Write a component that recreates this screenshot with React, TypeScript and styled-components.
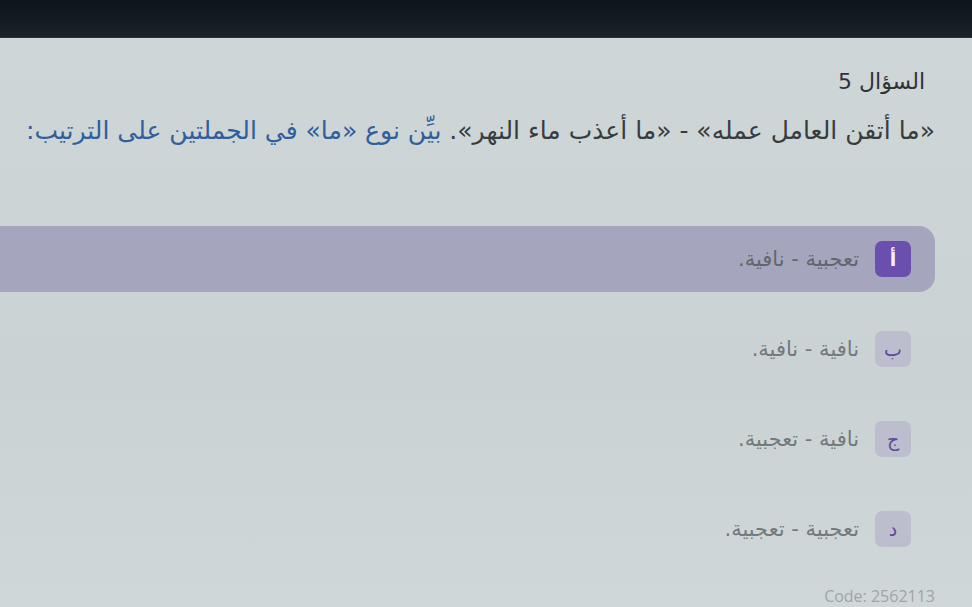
import styled, { createGlobalStyle } from 'styled-components'

const Global = createGlobalStyle`
  html, body {
    margin: 0;
    padding: 0;
    background: #cbd3d4;
    overflow: hidden;
  }
  #root {
    height: 607px;
  }
`

const TopBar = styled.div`
  height: 37px;
  background: linear-gradient(180deg, #0d1419 0%, #1a2329 100%);
  border-bottom: 1px solid #2a3338;
`

const Page = styled.main`
  direction: rtl;
  font-family: "DejaVu Sans", sans-serif;
  padding: 30px 37px 0 0;
  background: linear-gradient(180deg, #cfd6d7 0%, #cad2d3 60%, #d0d7d8 100%);
  height: 570px;
  box-sizing: border-box;
`

const Heading = styled.h2`
  margin: 0 10px 0 0;
  font-size: 22px;
  font-weight: 400;
  color: #2e3336;
  line-height: 28px;
`

const Question = styled.p`
  margin: 20px 0 0 0;
  font-size: 25px;
  line-height: 30px;
  color: #383c3f;
  white-space: nowrap;
`

const Hint = styled.span`
  color: #2f5f9e;
`

const Options = styled.div`
  display: flex;
  flex-direction: column;
  gap: 24px;
  margin-top: 80px;
`

const Row = styled.div<{ $active?: boolean }>`
  display: flex;
  align-items: center;
  gap: 16px;
  height: 66px;
  padding-right: 24px;
  border-radius: 0 16px 16px 0;
  background: ${(p) => (p.$active ? '#a5a6be' : 'transparent')};
`

const Badge = styled.span<{ $active?: boolean }>`
  width: 36px;
  height: 36px;
  border-radius: 7px;
  display: flex;
  align-items: center;
  justify-content: center;
  font-size: 19px;
  font-weight: ${(p) => (p.$active ? 700 : 400)};
  background: ${(p) => (p.$active ? '#6a4fae' : '#bcbecd')};
  color: ${(p) => (p.$active ? '#f4f2fb' : '#5b4b9c')};
`

const Label = styled.span<{ $active?: boolean }>`
  font-size: 21px;
  color: ${(p) => (p.$active ? '#63656d' : '#73797d')};
`

const Code = styled.div`
  margin-top: 24px;
  font-family: "Open Sans", "Liberation Sans", sans-serif;
  font-size: 16px;
  line-height: 20px;
  color: #9fa5a8;
  direction: ltr;
  text-align: right;
`

const options = [
  { letter: 'أ', text: 'تعجبية - نافية.', active: true },
  { letter: 'ب', text: 'نافية - نافية.' },
  { letter: 'ج', text: 'نافية - تعجبية.' },
  { letter: 'د', text: 'تعجبية - تعجبية.' },
]

export default function App() {
  return (
    <>
      <Global />
      <TopBar />
      <Page>
        <Heading>السؤال 5</Heading>
        <Question>
          «ما أتقن العامل عمله» - «ما أعذب ماء النهر». <Hint>بيِّن نوع «ما» في الجملتين على الترتيب:</Hint>
        </Question>
        <Options>
          {options.map((o) => (
            <Row key={o.letter} $active={o.active}>
              <Badge $active={o.active}>{o.letter}</Badge>
              <Label $active={o.active}>{o.text}</Label>
            </Row>
          ))}
        </Options>
        <Code>Code: 2562113</Code>
      </Page>
    </>
  )
}
